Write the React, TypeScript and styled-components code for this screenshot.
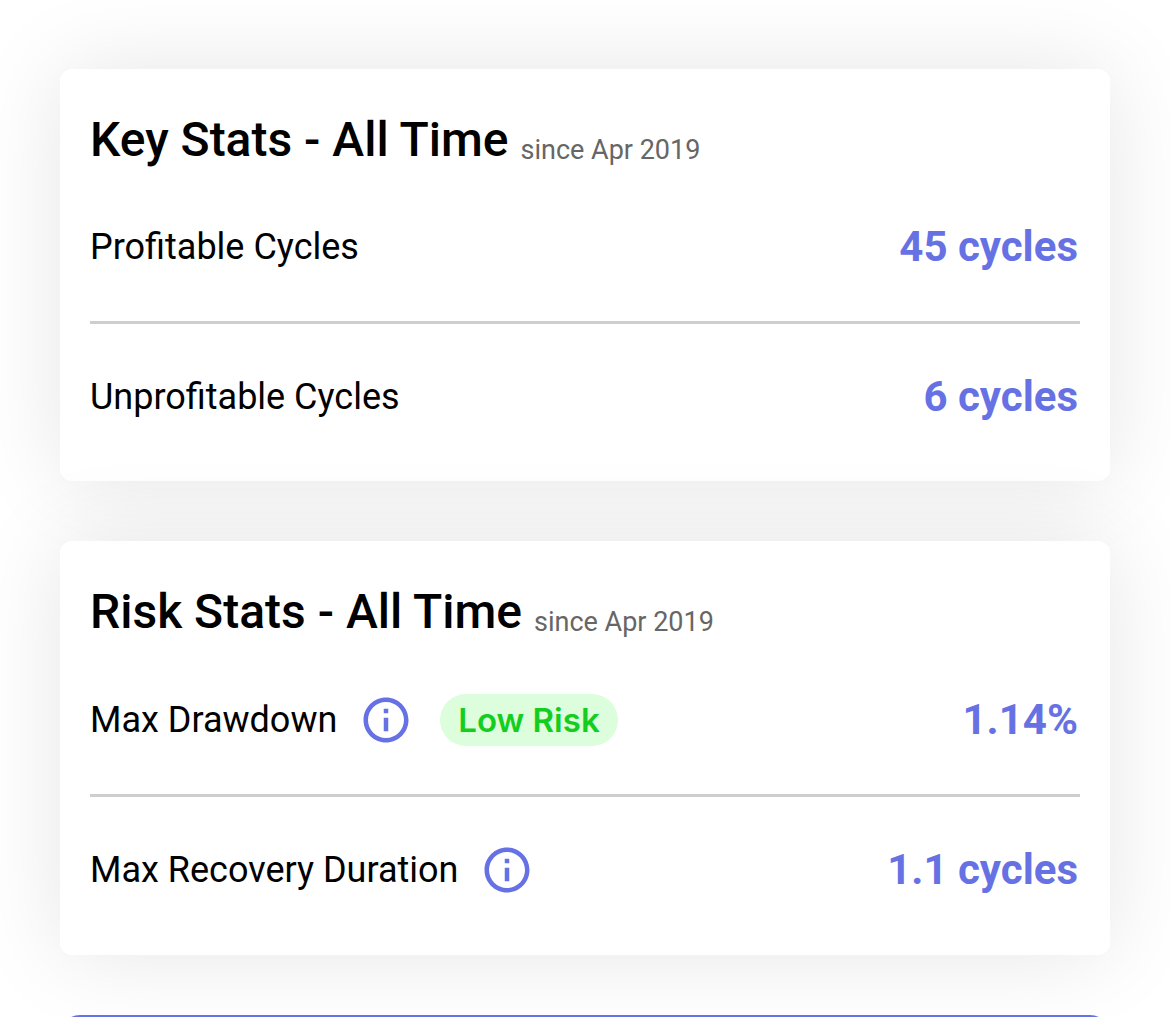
import React from "react";
import styled, { createGlobalStyle } from "styled-components";

const GlobalStyle = createGlobalStyle`
  *, *::before, *::after { box-sizing: border-box; }
  body {
    margin: 0;
    background: #fff;
    color: #000;
    font-family: Roboto, "Liberation Sans", sans-serif;
    overflow: hidden;
  }
`;

const Page = styled.main`
  display: flex;
  flex-direction: column;
  gap: 60px;
  padding: 69px 60px 0;
  height: 100vh;
  overflow: hidden;
`;

const Card = styled.section`
  flex: none;
  padding: 43px 30px 12px;
  border-radius: 12px;
  background: #fff;
  box-shadow: 0 0 90px rgba(0, 0, 0, 0.1);
`;

const Header = styled.header`
  display: flex;
  align-items: flex-end;
  gap: 12px;
`;

const Title = styled.h2`
  margin: 0;
  font-size: 48px;
  line-height: 56px;
  font-weight: 500;
`;

const Since = styled.span`
  font-size: 27px;
  line-height: 36px;
  color: #666;
`;

const Stats = styled.ul`
  margin: 0;
  padding: 5px 0 0;
  list-style: none;
`;

const Row = styled.li<{ $tall?: boolean }>`
  display: flex;
  align-items: center;
  height: ${({ $tall }) => ($tall ? 149 : 148)}px;
  padding-right: 2px;

  & + & {
    border-top: 3px solid #cecece;
  }
`;

const Label = styled.span`
  font-size: 36px;
  line-height: 42px;
`;

const Value = styled.strong`
  margin-left: auto;
  font-size: 42px;
  line-height: 50px;
  font-weight: 700;
  color: #6672e4;
`;

const InfoButton = styled.button`
  display: flex;
  margin: 0 0 0 22px;
  padding: 0;
  border: 0;
  background: none;
  color: #6672e4;
  cursor: pointer;
`;

const Badge = styled.span`
  margin-left: 27px;
  padding: 0 18px;
  border-radius: 26px;
  background: #dcfedc;
  color: #13ce20;
  font-family: Inter, Roboto, sans-serif;
  font-size: 33px;
  line-height: 52px;
  font-weight: 600;
`;

const NextCard = styled.section`
  flex: none;
  height: 200px;
  border: 3px solid #6672e4;
  border-radius: 20px;
`;

function Info({ label }: { label: string }) {
  return (
    <InfoButton type="button" aria-label={label}>
      <svg width="54" height="54" viewBox="0 0 24 24" fill="currentColor" aria-hidden="true">
        <path d="M11 7h2v2h-2zm0 4h2v6h-2zm1-9C6.480 2 2 6.480 2 12s4.480 10 10 10 10-4.480 10-10S17.520 2 12 2zm0 18c-4.410 0-8-3.590-8-8s3.590-8 8-8 8 3.590 8 8-3.590 8-8 8z" />
      </svg>
    </InfoButton>
  );
}

type Stat = { label: string; value: string; info?: boolean; badge?: string };

function StatCard({ title, stats }: { title: string; stats: Stat[] }) {
  return (
    <Card>
      <Header>
        <Title>{title}</Title>
        <Since>since Apr 2019</Since>
      </Header>
      <Stats>
        {stats.map((stat) => (
          <Row key={stat.label} $tall={stat.info}>
            <Label>{stat.label}</Label>
            {stat.info && <Info label={`About ${stat.label}`} />}
            {stat.badge && <Badge>{stat.badge}</Badge>}
            <Value>{stat.value}</Value>
          </Row>
        ))}
      </Stats>
    </Card>
  );
}

export default function App() {
  return (
    <>
      <GlobalStyle />
      <Page>
        <StatCard
          title="Key Stats - All Time"
          stats={[
            { label: "Profitable Cycles", value: "45 cycles" },
            { label: "Unprofitable Cycles", value: "6 cycles" },
          ]}
        />
        <StatCard
          title="Risk Stats - All Time"
          stats={[
            { label: "Max Drawdown", value: "1.14%", info: true, badge: "Low Risk" },
            { label: "Max Recovery Duration", value: "1.1 cycles", info: true },
          ]}
        />
        <NextCard />
      </Page>
    </>
  );
}
